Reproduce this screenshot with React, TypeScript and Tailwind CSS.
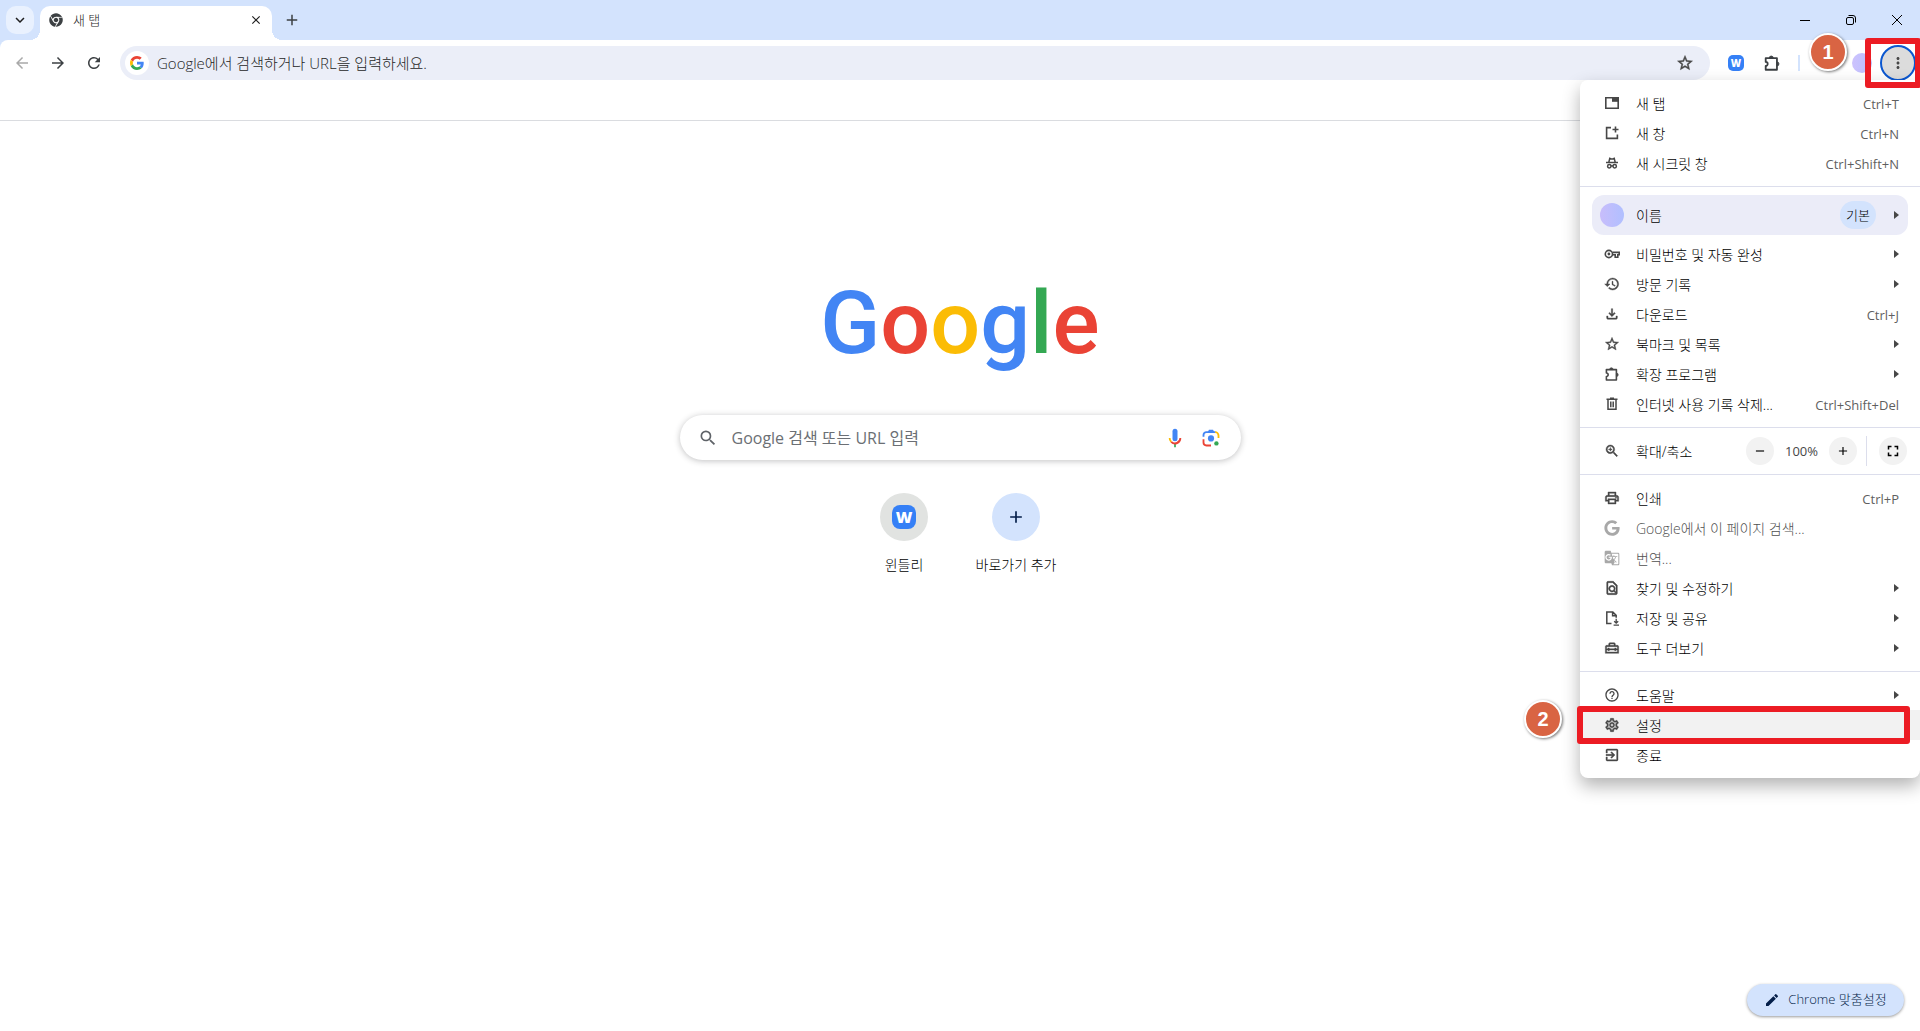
import React from "react";
import {
  MdAdd,
  MdArrowBack,
  MdArrowForward,
  MdClose,
  MdEdit,
  MdFullscreen,
  MdGTranslate,
  MdHelpOutline,
  MdHistory,
  MdKeyboardArrowDown,
  MdMoreVert,
  MdOutlineExitToApp,
  MdOutlineFileDownload,
  MdOutlineFindInPage,
  MdOutlineHomeRepairService,
  MdOutlinePrint,
  MdOutlineSettings,
  MdRefresh,
  MdRemove,
  MdSearch,
  MdStarBorder,
  MdZoomIn,
} from "react-icons/md";
import { FaChrome, FaGoogle } from "react-icons/fa";

type IconProps = { className?: string; strokeWidth?: number };

interface MenuEntry {
  label: string;
  icon: React.ComponentType<IconProps>;
  shortcut?: string;
  submenu?: boolean;
  disabled?: boolean;
}

// Material icons are a little thin at 16px, so outline them slightly.
// Their invisible bounding path (fill="none") must stay unstroked.
const heavy = (Icon: React.ComponentType<IconProps>) =>
  function HeavyIcon({ className }: IconProps) {
    return <Icon className={`[&>[fill=none]]:stroke-none ${className}`} strokeWidth={0.6} />;
  };

const HistoryIcon = heavy(MdHistory);
const DownloadIcon = heavy(MdOutlineFileDownload);
const StarIcon = heavy(MdStarBorder);
const PrintIcon = heavy(MdOutlinePrint);
const FindIcon = heavy(MdOutlineFindInPage);
const ToolboxIcon = heavy(MdOutlineHomeRepairService);
const SettingsIcon = heavy(MdOutlineSettings);
const ExitIcon = heavy(MdOutlineExitToApp);
const ZoomInIcon = heavy(MdZoomIn);

function TabIcon({ className }: IconProps) {
  return (
    <svg viewBox="0 0 16 16" className={className} fill="none" aria-hidden="true">
      <path d="M1.8 2.8h12.4v10.4H1.8z" stroke="currentColor" strokeWidth="1.6" />
      <path d="M8 2.8h6v4H8z" fill="currentColor" />
    </svg>
  );
}

function NewWindowIcon({ className }: IconProps) {
  return (
    <svg viewBox="0 0 16 16" className={className} fill="none" stroke="currentColor" strokeWidth="1.6" aria-hidden="true">
      <path d="M7 2.6H2.6v10.8h10.8V9.5M11.5 1.5v6M8.5 4.5h6" />
    </svg>
  );
}

function IncognitoIcon({ className }: IconProps) {
  return (
    <svg viewBox="0 0 16 16" className={className} fill="none" stroke="currentColor" strokeWidth="1.5" aria-hidden="true">
      <path d="M2 7.5h12M4.8 7.2l1-3.9 1.4.6h1.6l1.4-.6 1 3.9" />
      <circle cx="5.3" cy="11.2" r="1.7" />
      <circle cx="10.7" cy="11.2" r="1.7" />
      <path d="M6.9 10.9h2.2" />
    </svg>
  );
}

function KeyIcon({ className }: IconProps) {
  return (
    <svg viewBox="0 0 16 16" className={className} fill="none" stroke="currentColor" strokeWidth="1.6" aria-hidden="true">
      <circle cx="4.9" cy="8" r="3.6" />
      <circle cx="4.9" cy="8" r="1.4" fill="currentColor" stroke="none" />
      <path d="M8.4 6.4h6.8v2.4h-1.4v2.4h-2.6V8.8H8.6" />
    </svg>
  );
}

function PuzzleIcon({ className }: IconProps) {
  return (
    <svg viewBox="0 0 20 20" className={className} fill="none" stroke="currentColor" strokeWidth="2" strokeLinejoin="round" aria-hidden="true">
      <path d="M3 4.500h12.500v13H3v-4.300a2.200 2.200 0 0 0 0-4.400z" />
      <path d="M7 4.500a2.200 2.200 0 0 1 4.400 0zM15.500 8.800a2.200 2.200 0 0 1 0 4.400z" fill="currentColor" strokeWidth="1" />
    </svg>
  );
}

function TrashIcon({ className }: IconProps) {
  return (
    <svg viewBox="0 0 16 16" className={className} fill="none" stroke="currentColor" strokeWidth="1.5" aria-hidden="true">
      <path d="M2.500 3.300h11M6 2.300h4M4 3.500v9.700h8V3.500M6.800 5.500v5.800M9.200 5.500v5.800" />
    </svg>
  );
}

function SaveShareIcon({ className }: IconProps) {
  return (
    <svg viewBox="0 0 16 16" className={className} fill="none" stroke="currentColor" strokeWidth="1.5" aria-hidden="true">
      <path d="M7.5 13.4H2.8V2h6l3.4 3.4v2.4M8.6 2v3.8h3.6" />
      <path d="M12.2 8.8v4.4M10.2 11.2l2 2 2-2M9.6 15.2h5.4" strokeWidth="1.3" />
    </svg>
  );
}

function GoogleG({ className }: IconProps) {
  return (
    <svg viewBox="0 0 48 48" className={className} aria-hidden="true">
      <path fill="#EA4335" d="M24 9.5c3.54 0 6.71 1.22 9.21 3.6l6.85-6.85C35.9 2.38 30.47 0 24 0 14.62 0 6.51 5.38 2.56 13.22l7.98 6.19C12.43 13.72 17.74 9.5 24 9.5z" />
      <path fill="#4285F4" d="M46.98 24.55c0-1.57-.15-3.09-.38-4.55H24v9.02h12.94c-.58 2.96-2.26 5.48-4.78 7.18l7.73 6c4.51-4.18 7.09-10.36 7.09-17.65z" />
      <path fill="#FBBC05" d="M10.53 28.59c-.48-1.45-.76-2.99-.76-4.59s.27-3.14.76-4.59l-7.98-6.19C.92 16.46 0 20.12 0 24c0 3.88.92 7.54 2.56 10.78l7.97-6.19z" />
      <path fill="#34A853" d="M24 48c6.48 0 11.93-2.13 15.89-5.81l-7.73-6c-2.15 1.45-4.92 2.3-8.16 2.3-6.26 0-11.57-4.22-13.47-9.91l-7.98 6.19C6.51 42.62 14.62 48 24 48z" />
    </svg>
  );
}

function MicIcon({ className }: IconProps) {
  return (
    <svg viewBox="0 0 24 24" className={className} aria-hidden="true">
      <rect x="9" y="1" width="6" height="15" rx="3" fill="#4285F4" />
      <path d="M11 19h2v4h-2z" fill="#34A853" />
      <path d="M4.500 12h2.200c0 1.500.6 2.900 1.600 3.800L6.700 17.500A7.500 7.500 0 0 1 4.500 12z" fill="#FBBC04" />
      <path d="M6.700 17.500l1.600-1.700a5.300 5.300 0 0 0 9-3.800h2.200a7.500 7.500 0 0 1-12.800 5.500z" fill="#EA4335" />
    </svg>
  );
}

function LensIcon({ className }: IconProps) {
  return (
    <svg viewBox="0 0 24 24" className={className} fill="none" strokeWidth="2.2" aria-hidden="true">
      <path d="M3 10.500V8.500A3.500 3.500 0 0 1 6.500 5h11" stroke="#4285F4" />
      <path d="M8 5l1.500-2.800h5L16 5z" fill="#4285F4" />
      <path d="M17 5a4 4 0 0 1 4 4v3" stroke="#FBBC04" />
      <path d="M3 13.500v4A3.500 3.500 0 0 0 6.500 21H12" stroke="#EA4335" />
      <circle cx="12" cy="12.500" r="3.700" fill="#4285F4" />
      <circle cx="18.500" cy="18.500" r="2.600" fill="#34A853" />
    </svg>
  );
}

const windowItems: MenuEntry[] = [
  { label: "새 탭", icon: TabIcon, shortcut: "Ctrl+T" },
  { label: "새 창", icon: NewWindowIcon, shortcut: "Ctrl+N" },
  { label: "새 시크릿 창", icon: IncognitoIcon, shortcut: "Ctrl+Shift+N" },
];

const historyItems: MenuEntry[] = [
  { label: "비밀번호 및 자동 완성", icon: KeyIcon, submenu: true },
  { label: "방문 기록", icon: HistoryIcon, submenu: true },
  { label: "다운로드", icon: DownloadIcon, shortcut: "Ctrl+J" },
  { label: "북마크 및 목록", icon: StarIcon, submenu: true },
  { label: "확장 프로그램", icon: PuzzleIcon, submenu: true },
  { label: "인터넷 사용 기록 삭제...", icon: TrashIcon, shortcut: "Ctrl+Shift+Del" },
];

const pageItems: MenuEntry[] = [
  { label: "인쇄", icon: PrintIcon, shortcut: "Ctrl+P" },
  { label: "Google에서 이 페이지 검색...", icon: FaGoogle, disabled: true },
  { label: "번역...", icon: MdGTranslate, disabled: true },
  { label: "찾기 및 수정하기", icon: FindIcon, submenu: true },
  { label: "저장 및 공유", icon: SaveShareIcon, submenu: true },
  { label: "도구 더보기", icon: ToolboxIcon, submenu: true },
];

function SubmenuArrow() {
  return (
    <svg viewBox="0 0 5 8" className="h-2 w-[5px] fill-[#474747]" aria-hidden="true">
      <path d="M0 0l5 4-5 4z" />
    </svg>
  );
}

function MenuRow({ item }: { item: MenuEntry }) {
  const Icon = item.icon;
  return (
    <button
      disabled={item.disabled}
      className="flex h-[30px] w-full items-center pr-[21px] pl-6 text-left disabled:text-[#505050]"
    >
      <Icon className={item.disabled ? "h-4 w-4 text-[#a8a8a8]" : "h-4 w-4 text-[#474747]"} />
      <span className="ml-4 grow pt-px">{item.label}</span>
      {item.shortcut && <span className="pt-0.5 text-[13px] font-normal text-[#5f5f5f]">{item.shortcut}</span>}
      {item.submenu && <SubmenuArrow />}
    </button>
  );
}

function Separator() {
  return <div className="h-px bg-[#dcdeec]" />;
}

function StepBadge({ step }: { step: number }) {
  return (
    <span className="flex h-[38px] w-[38px] items-center justify-center rounded-full border-2 border-white bg-[#d96443] font-['Liberation_Sans'] text-xl font-bold text-white shadow-[1px_1px_3px_rgba(0,0,0,0.55)]">
      {step}
    </span>
  );
}

function SiteLogo({ className }: IconProps) {
  return (
    <span className={`flex items-center justify-center bg-[#3580f6] font-['Open_Sans'] font-extrabold text-white ${className}`}>
      W
    </span>
  );
}

function TabStrip() {
  return (
    <div className="flex h-10 items-end bg-[#d3e3fd]">
      <button aria-label="탭 검색" className="mb-1.5 ml-1.5 flex h-7 w-7 items-center justify-center rounded-[10px] bg-[#e9f1fe]">
        <MdKeyboardArrowDown className="h-[18px] w-[18px]" />
      </button>
      <div className="relative ml-1.5 flex h-[34px] w-[232px] items-center rounded-t-[10px] bg-white pr-2 pb-1.5 pl-[9px]">
        <span className="absolute bottom-0 -left-2.5 h-2.5 w-2.5 bg-[radial-gradient(circle_at_0_0,transparent_10px,white_10px)]" />
        <span className="absolute -right-2.5 bottom-0 h-2.5 w-2.5 bg-[radial-gradient(circle_at_100%_0,transparent_10px,white_10px)]" />
        <FaChrome className="h-3.5 w-3.5 text-[#3c4043]" />
        <span className="ml-2.5 grow pt-0.5 text-[13px]">새 탭</span>
        <button aria-label="탭 닫기" className="flex h-4 w-4 items-center justify-center">
          <MdClose className="h-3.5 w-3.5" />
        </button>
      </div>
      <button aria-label="새 탭" className="mb-1.5 ml-1.5 flex h-7 w-7 items-center justify-center text-[#3c4043]">
        <MdAdd className="h-[18px] w-[18px]" />
      </button>
      <div className="grow" />
      <div className="flex h-10 text-black">
        <button aria-label="최소화" className="flex w-[46px] items-center justify-center">
          <span className="h-px w-2.5 bg-black" />
        </button>
        <button aria-label="이전 크기로 복원" className="flex w-[46px] items-center justify-center">
          <svg viewBox="0 0 10 10" className="h-2.5 w-2.5" fill="none" stroke="currentColor">
            <rect x="0.5" y="2.500" width="7" height="7" rx="1.500" />
            <path d="M2.500.5H7A2.500 2.500 0 0 1 9.500 3v4.500" />
          </svg>
        </button>
        <button aria-label="닫기" className="flex w-[46px] items-center justify-center">
          <svg viewBox="0 0 10 10" className="h-2.5 w-2.5" stroke="currentColor">
            <path d="M0 0l10 10M10 0L0 10" />
          </svg>
        </button>
      </div>
    </div>
  );
}

function Toolbar() {
  return (
    <div className="flex h-[46px] items-center rounded-tl-lg bg-white pr-1 pl-1">
      <button aria-label="뒤로" disabled className="flex h-9 w-9 items-center justify-center text-[#a9a9a9]">
        <MdArrowBack className="h-[18px] w-[18px]" />
      </button>
      <button aria-label="앞으로" className="flex h-9 w-9 items-center justify-center text-[#3c4043]">
        <MdArrowForward className="h-[18px] w-[18px]" />
      </button>
      <button aria-label="새로고침" className="flex h-9 w-9 items-center justify-center text-[#3c4043]">
        <MdRefresh className="h-[18px] w-[18px]" />
      </button>
      <div className="ml-2 flex h-[34px] grow items-center rounded-full bg-[#ebeef8] pr-4 pl-[5px]">
        <span className="flex h-6 w-6 items-center justify-center rounded-full bg-white">
          <GoogleG className="h-3.5 w-3.5" />
        </span>
        <input
          aria-label="주소창"
          placeholder="Google에서 검색하거나 URL을 입력하세요."
          className="ml-2 grow bg-transparent text-[15px] outline-none placeholder:text-[#1f1f1f]"
        />
        <button aria-label="북마크 추가" className="text-[#474747]">
          <StarIcon className="h-[18px] w-[18px]" />
        </button>
      </div>
      <button aria-label="윈들리" className="ml-2 flex h-9 w-9 items-center justify-center">
        <SiteLogo className="h-4 w-4 rounded-[5px] text-[10px]" />
      </button>
      <button aria-label="확장 프로그램" className="flex h-9 w-9 items-center justify-center text-[#3c4043]">
        <PuzzleIcon className="h-[18px] w-[18px]" />
      </button>
      <span className="mx-2 h-4 w-0.5 bg-[#d3e3fd]" />
      <div className="ml-11 flex items-center gap-2">
        <button aria-label="프로필" className="h-5 w-5 rounded-full bg-linear-to-r from-[#cdc2fd] to-[#b8c0ff]" />
        <button aria-label="Chrome 맞춤설정 및 제어" className="flex h-9 w-9 items-center justify-center rounded-full border-2 border-[#0b57d0] bg-[#dcdcdc]">
          <MdMoreVert className="h-[18px] w-[18px] text-[#474747]" />
        </button>
      </div>
    </div>
  );
}

function ChromeMenu() {
  return (
    <div className="w-[340px] rounded-lg bg-white py-2 text-sm text-black shadow-[0_8px_18px_rgba(0,0,0,0.3)]">
      {windowItems.map((item) => (
        <MenuRow key={item.label} item={item} />
      ))}
      <div className="py-2">
        <Separator />
      </div>

      <button className="mx-3 mb-1 flex h-10 w-[316px] items-center rounded-xl bg-[#ebecf8] pr-[9px] pl-2 text-left">
        <span className="h-6 w-6 rounded-full bg-linear-to-r from-[#c8bdfb] to-[#b0bfff]" />
        <span className="ml-3 grow pt-px">이름</span>
        <span className="mr-[18px] flex h-7 w-9 items-center justify-center rounded-full bg-[#d3e3fd] text-[13px]">기본</span>
        <SubmenuArrow />
      </button>
      {historyItems.map((item) => (
        <MenuRow key={item.label} item={item} />
      ))}
      <div className="pt-2">
        <Separator />
      </div>

      {/* Zoom controls */}
      <div className="flex h-[46px] items-center pr-[13px] pl-6">
        <ZoomInIcon className="h-4 w-4 text-[#474747]" />
        <span className="ml-4 grow pt-px">확대/축소</span>
        <button aria-label="축소" className="flex h-7 w-7 items-center justify-center rounded-full bg-[#f2f2f2]">
          <MdRemove className="h-3.5 w-3.5" />
        </button>
        <span className="w-[55px] text-center text-[13px] font-normal text-[#474747]">100%</span>
        <button aria-label="확대" className="flex h-7 w-7 items-center justify-center rounded-full bg-[#f2f2f2]">
          <MdAdd className="h-3.5 w-3.5" />
        </button>
        <span className="mr-3 ml-[9px] h-[30px] w-px bg-[#dcdeec]" />
        <button aria-label="전체화면" className="flex h-7 w-7 items-center justify-center rounded-full bg-[#f2f2f2]">
          <MdFullscreen className="h-[18px] w-[18px]" />
        </button>
      </div>
      <div className="pb-2">
        <Separator />
      </div>

      {pageItems.map((item) => (
        <MenuRow key={item.label} item={item} />
      ))}
      <div className="py-2">
        <Separator />
      </div>

      <MenuRow item={{ label: "도움말", icon: MdHelpOutline, submenu: true }} />
      <div className="relative bg-[#f2f2f2]">
        <MenuRow item={{ label: "설정", icon: SettingsIcon }} />
        <span className="absolute -inset-y-1 right-2.5 -left-[3px] rounded-[3px] border-[6px] border-[#ec1c24]" />
        <span className="absolute -top-2.5 -left-14">
          <StepBadge step={2} />
        </span>
      </div>
      <MenuRow item={{ label: "종료", icon: ExitIcon }} />
    </div>
  );
}

function NewTabPage() {
  return (
    <main className="flex grow flex-col items-center">
      <h1 className="mt-[142px] font-['Roboto'] text-[88px] leading-[120px] font-medium">
        <span className="text-[#4285f4]">G</span>
        <span className="text-[#ea4335]">o</span>
        <span className="text-[#fbbc05]">o</span>
        <span className="text-[#4285f4]">g</span>
        <span className="text-[#34a853]">l</span>
        <span className="text-[#ea4335]">e</span>
      </h1>
      <div className="mt-8 flex h-[45px] w-[561px] items-center rounded-full bg-white pr-5 pl-[18px] shadow-[0_1px_6px_rgba(32,33,36,0.28)]">
        <MdSearch className="h-5 w-5 text-[#5f6368]" />
        <input
          aria-label="Google 검색"
          placeholder="Google 검색 또는 URL 입력"
          className="ml-3.5 min-w-0 grow bg-transparent text-base font-normal outline-none placeholder:text-[#6b6f74]"
        />
        <button aria-label="음성 검색" className="mr-4">
          <MicIcon className="h-5 w-5" />
        </button>
        <button aria-label="이미지로 검색">
          <LensIcon className="h-5 w-5" />
        </button>
      </div>
      <div className="mt-[33px] flex text-sm text-black">
        <a href="#windly" className="flex w-28 flex-col items-center gap-3.5">
          <span className="flex h-12 w-12 items-center justify-center rounded-full bg-[#e1e3e1]">
            <SiteLogo className="h-6 w-6 rounded-lg text-base" />
          </span>
          윈들리
        </a>
        <button className="flex w-28 flex-col items-center gap-3.5">
          <span className="flex h-12 w-12 items-center justify-center rounded-full bg-[#d3e3fd] text-[#041e49]">
            <MdAdd className="h-5 w-5" />
          </span>
          바로가기 추가
        </button>
      </div>
    </main>
  );
}

export default function App() {
  return (
    <div className="relative flex min-h-screen flex-col overflow-hidden bg-white font-['Open_Sans','Noto_Sans_CJK_KR',sans-serif] font-light text-[#1f1f1f]">
      <header className="border-b border-[#dadce0] bg-[linear-gradient(#d3e3fd_60px,white_60px)] pb-[34px]">
        <TabStrip />
        <Toolbar />
      </header>
      <NewTabPage />

      <div className="absolute top-20 right-0">
        <ChromeMenu />
      </div>
      <div className="absolute top-[38px] -right-px h-[50px] w-14 rounded-[3px] border-[6px] border-[#ec1c24]" />
      <div className="absolute top-[33px] right-[73px]">
        <StepBadge step={1} />
      </div>

      <button className="absolute right-4 bottom-[15px] flex h-8 w-[157px] items-center justify-center gap-2 rounded-full bg-[#d3e3fd] text-[13px] text-[#041e49] shadow-[0_1px_3px_rgba(0,0,0,0.4)]">
        <MdEdit className="h-4 w-4" />
        Chrome 맞춤설정
      </button>
    </div>
  );
}
